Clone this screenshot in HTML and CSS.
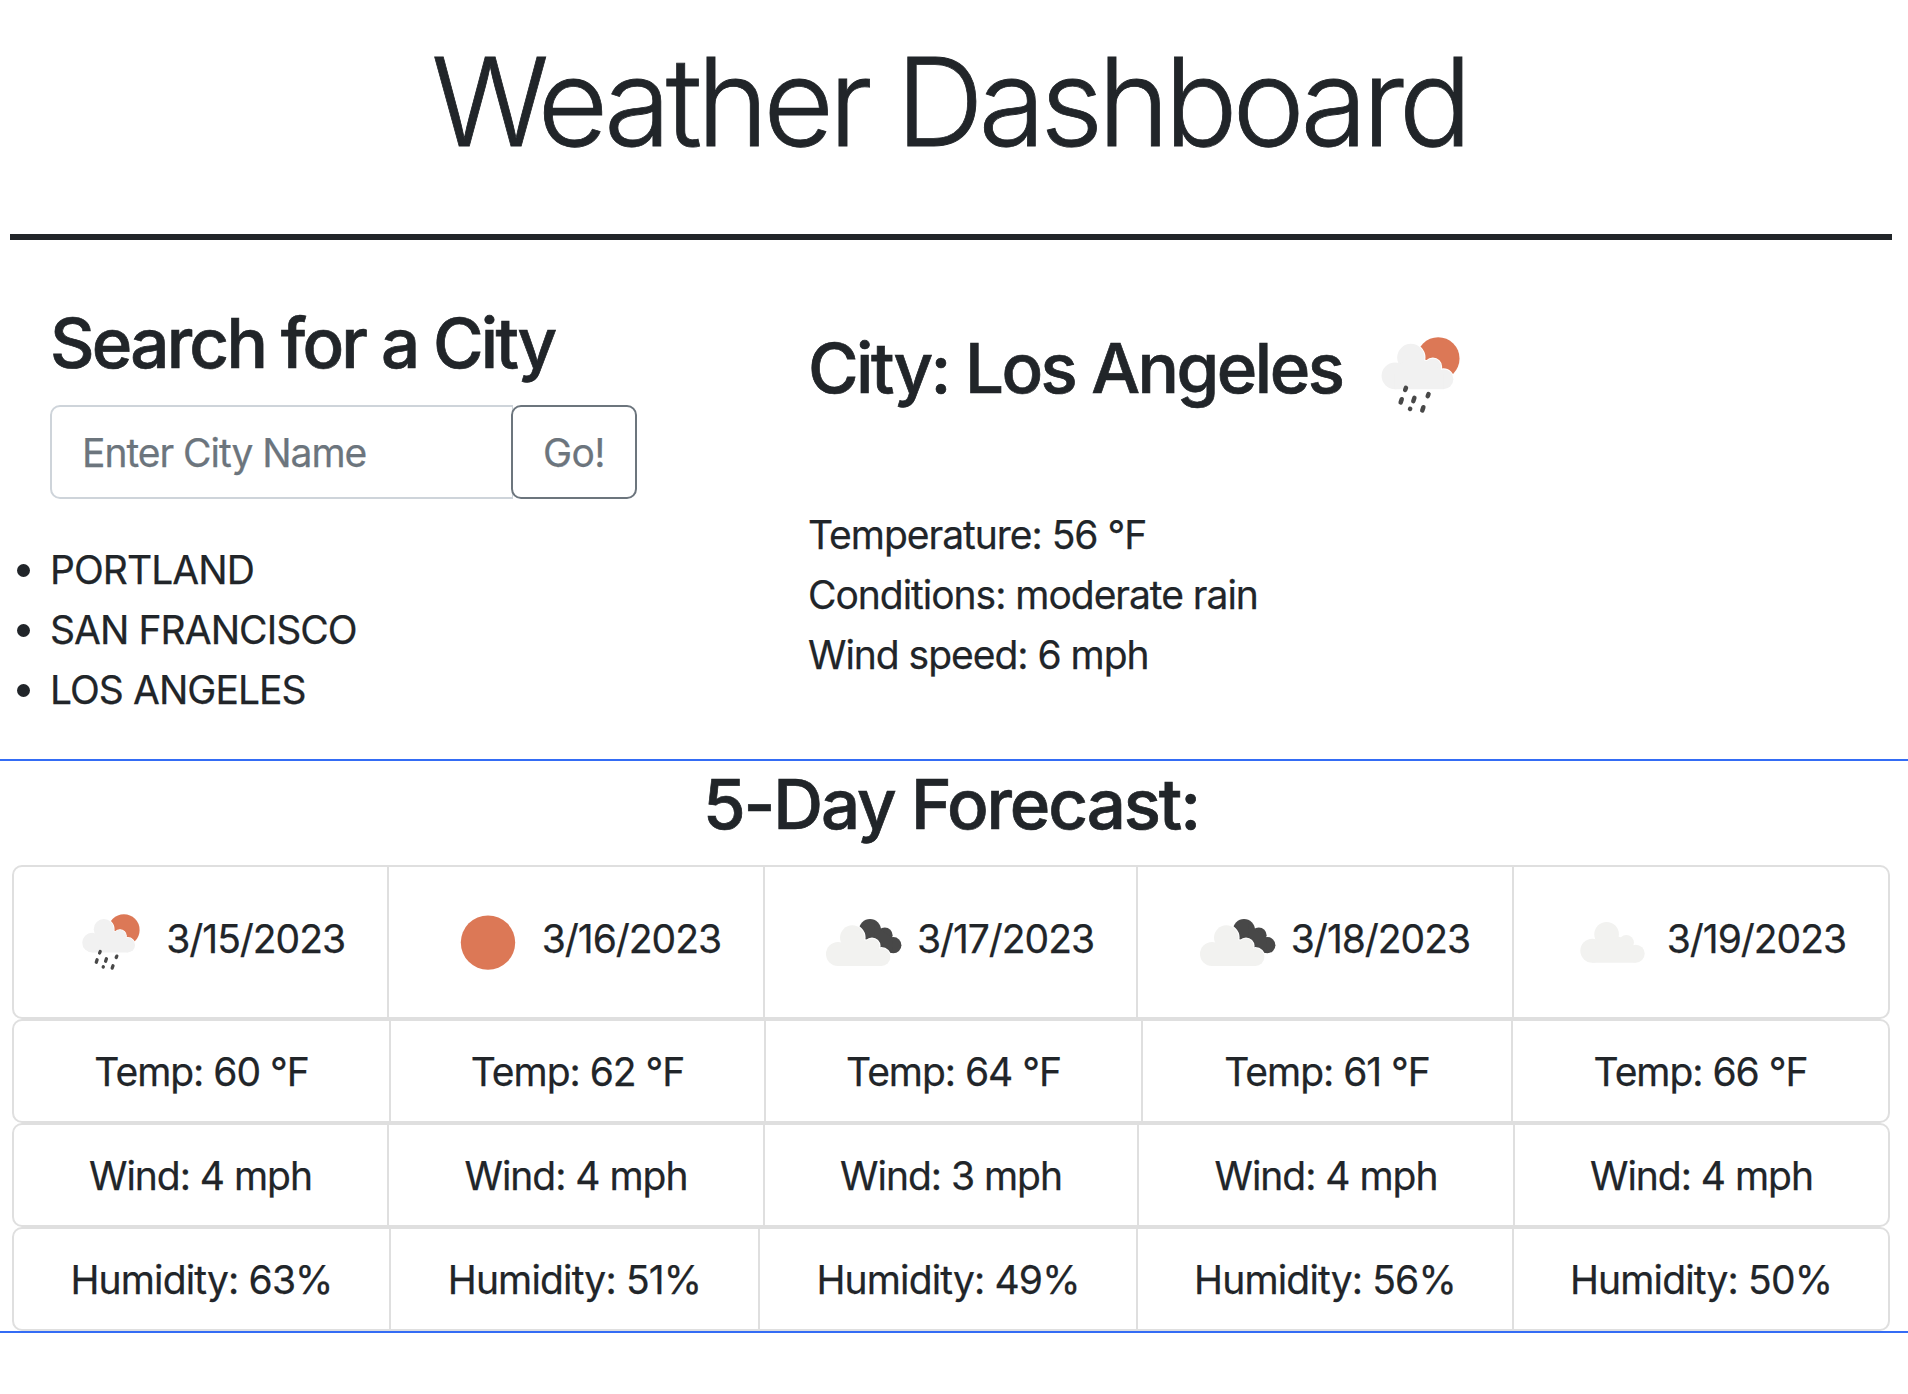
FILE: index.html
```html
<!DOCTYPE html>
<html lang="en">
<head>
<meta charset="utf-8">
<title>Weather Dashboard</title>
<link rel="stylesheet" href="styles.css">
</head>
<body>
<svg class="sprite" aria-hidden="true">
  <defs>
    <g id="cloud">
      <circle cx="39.3" cy="45.6" r="12.3"/>
      <circle cx="25" cy="62" r="12"/>
      <circle cx="59" cy="54" r="7.6"/>
      <circle cx="68.4" cy="65" r="9"/>
      <path d="M25 74H68.4V60L59 50L39 45L25 55Z"/>
    </g>
    <symbol id="rain" viewBox="7 5 100 100">
      <circle cx="68.9" cy="42.9" r="15.7" fill="#dc7856"/>
      <g transform="translate(16.6 4.8) scale(.82)">
        <use href="#cloud" fill="#fff" stroke="#fff" stroke-width="1.6"/>
        <use href="#cloud" fill="#f1f1f1"/>
      </g>
      <g stroke="#484848" stroke-width="3.3" stroke-linecap="round">
        <path d="M45.2 64.5L44.6 66M42.1 72.8L41.3 75.2M51.4 71.8L50.6 74.2M61.8 69.1L61.2 70.5M48.3 79.8L48.2 80M58 78.7L57.2 81.1"/>
      </g>
    </symbol>
    <symbol id="sun" viewBox="0 0 100 100"><circle cx="50" cy="50.6" r="27.2" fill="#dc7856"/></symbol>
    <symbol id="broken" viewBox="0 0 100 100">
      <g fill="#484848">
        <circle cx="57" cy="38" r="11"/><circle cx="71.8" cy="43.2" r="7.8"/><circle cx="80.3" cy="53.2" r="8.1"/>
        <path d="M62 31L68 38L80 46L79 61L60 61Z"/>
      </g>
      <use href="#cloud" fill="#fff" stroke="#fff" stroke-width="2"/>
      <use href="#cloud" fill="#f2f2f0"/>
    </symbol>
    <symbol id="overcast" viewBox="0 0 100 100"><use href="#cloud" x="4.3" y="-3.3" fill="#f2f2f0"/></symbol>
  </defs>
</svg>

<header class="page-header"><h1>Weather Dashboard</h1></header>

<main class="columns">
  <section class="search">
    <h3>Search for a City</h3>
    <form class="input-group">
      <input class="city-input" type="text" placeholder="Enter City Name">
      <button class="go" type="button">Go!</button>
    </form>
    <ul class="history">
      <li>PORTLAND</li>
      <li>SAN FRANCISCO</li>
      <li>LOS ANGELES</li>
    </ul>
  </section>
  <section class="current">
    <div class="current-head">
      <h3>City: Los Angeles</h3>
      <svg class="icon-lg"><use href="#rain"/></svg>
    </div>
    <p>Temperature: 56 °F</p>
    <p>Conditions: moderate rain</p>
    <p>Wind speed: 6 mph</p>
  </section>
</main>

<section class="forecast">
  <h3>5-Day Forecast:</h3>
  <ul class="row days">
    <li><svg class="icon"><use href="#rain"/></svg><span>3/15/2023</span></li>
    <li><svg class="icon"><use href="#sun"/></svg><span>3/16/2023</span></li>
    <li><svg class="icon"><use href="#broken"/></svg><span>3/17/2023</span></li>
    <li><svg class="icon"><use href="#broken"/></svg><span>3/18/2023</span></li>
    <li><svg class="icon"><use href="#overcast"/></svg><span>3/19/2023</span></li>
  </ul>
  <ul class="row temps">
    <li>Temp: 60 °F</li>
    <li>Temp: 62 °F</li>
    <li>Temp: 64 °F</li>
    <li>Temp: 61 °F</li>
    <li>Temp: 66 °F</li>
  </ul>
  <ul class="row winds">
    <li>Wind: 4 mph</li>
    <li>Wind: 4 mph</li>
    <li>Wind: 3 mph</li>
    <li>Wind: 4 mph</li>
    <li>Wind: 4 mph</li>
  </ul>
  <ul class="row humidity">
    <li>Humidity: 63%</li>
    <li>Humidity: 51%</li>
    <li>Humidity: 49%</li>
    <li>Humidity: 56%</li>
    <li>Humidity: 50%</li>
  </ul>
</section>
</body>
</html>
```
FILE: styles.css
```css
* { box-sizing: border-box; }

body {
  margin: 0;
  background: #fff;
  color: #212529;
  font-family: Inter, "Liberation Sans", sans-serif;
  font-size: 39px;
  font-weight: 400;
  line-height: 60px;
  letter-spacing: -1.03px;
  -webkit-text-stroke: 0.25px;
}

h1, h3, p, ul { margin: 0; padding: 0; }
ul { list-style: none; }

.sprite { position: absolute; width: 0; height: 0; }

.page-header {
  height: 240px;
  margin: 0 16px 0 10px;
  padding: 25px 4px 0 0;
  border-bottom: 6px solid #212529;
  text-align: center;
}

h1 {
  font-size: 122px;
  font-weight: 300;
  line-height: 154px;
  letter-spacing: -5.35px;
  -webkit-text-stroke: 0.8px;
}

h3 {
  font-size: 69px;
  font-weight: 500;
  line-height: 84px;
  letter-spacing: -2.75px;
  -webkit-text-stroke: 0.7px;
}

.columns {
  display: grid;
  grid-template-columns: 808px 1fr;
  height: 519px;
}

.search { padding: 61px 0 0 50px; }

.input-group {
  display: flex;
  width: 587px;
  height: 94px;
  margin-top: 20px;
}

.city-input {
  flex: 1;
  min-width: 0;
  margin-right: -2px;
  padding: 2px 30px 0;
  border: 2px solid #ced4da;
  border-right-width: 1px;
  border-radius: 10px 0 0 10px;
  background: #fff;
  font: inherit;
  letter-spacing: inherit;
}

.city-input::placeholder { color: #6c757d; opacity: 1; }

.go {
  position: relative;
  width: 126px;
  padding: 2px 0 0;
  border: 2px solid #6c757d;
  border-radius: 10px;
  background: #fff;
  color: #6c757d;
  font: inherit;
  letter-spacing: -0.6px;
}

.history { margin-top: 41px; letter-spacing: -0.95px; }

.history li::before {
  content: "";
  display: inline-block;
  width: 13px;
  height: 13px;
  margin: 0 20px 7px -33px;
  border-radius: 50%;
  background: #212529;
  vertical-align: baseline;
}

.current { padding-top: 67px; }

.current-head {
  display: flex;
  align-items: flex-start;
  height: 198px;
}

.current-head h3 { width: 546px; margin-top: 19px; white-space: nowrap; letter-spacing: -2.5px; }

.icon-lg { width: 136px; height: 136px; }

.forecast {
  height: 574px;
  padding: 1px 18px 0 12px;
  border-top: 2px solid #346cf5;
  border-bottom: 2px solid #346cf5;
}

.forecast h3 { height: 103px; text-align: center; letter-spacing: -2.1px; }

.row {
  display: grid;
  height: 104px;
  border: 2px solid #dfdfdf;
  border-radius: 10px;
  text-align: center;
}

.row li { padding: 21px 0 0; border-right: 2px solid #dfdfdf; line-height: 60px; }
.row li:last-child { border-right: 0; }

.days { height: 154px; grid-template-columns: 375px 376px 373px 376px 1fr; }
.temps { grid-template-columns: 377px 375px 377px 370px 1fr; }
.winds { grid-template-columns: 375px 376px 374px 376px 1fr; }
.humidity { grid-template-columns: 377px 369px 378px 376px 1fr; letter-spacing: -0.85px; }

.days li {
  display: flex;
  justify-content: flex-end;
  align-items: flex-start;
  padding: 25px 42px 0 0;
}

.days span { margin-top: 17px; }

.icon { width: 100px; height: 100px; margin-right: 4px; }
```
